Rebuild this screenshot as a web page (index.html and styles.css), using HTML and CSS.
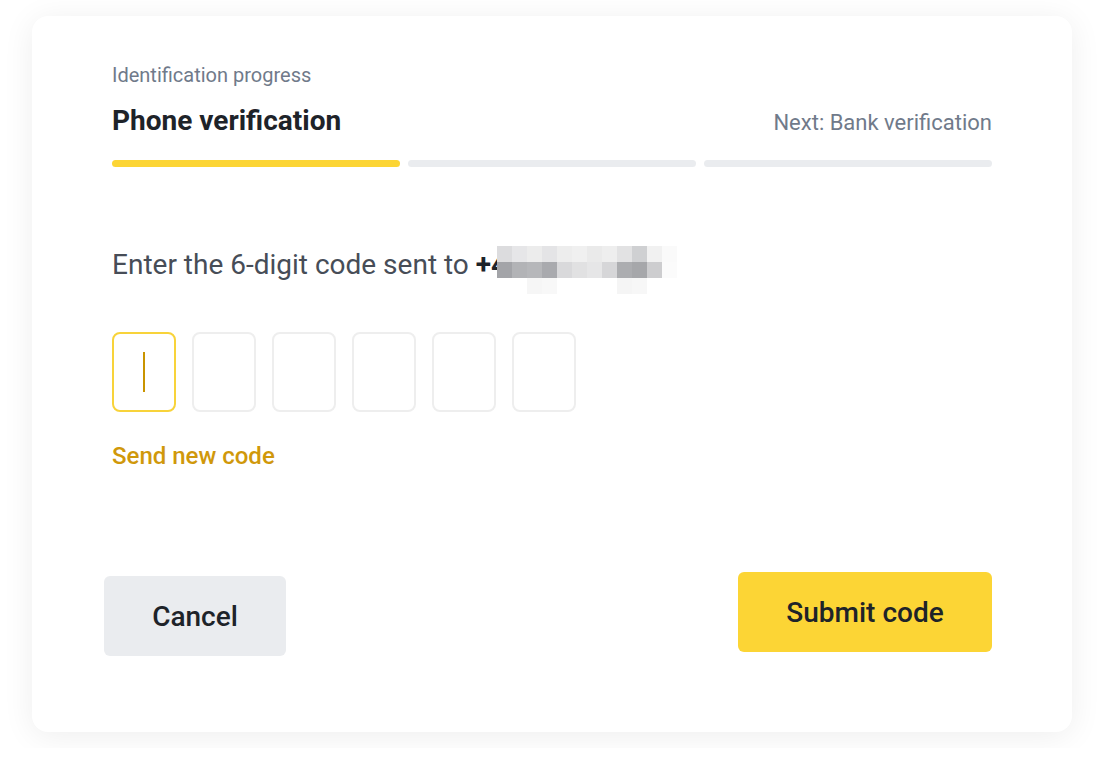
FILE: index.html
```html
<!DOCTYPE html>
<html lang="en">
<head>
    <meta charset="UTF-8">
    <meta name="viewport" content="width=device-width, initial-scale=1.0">
    <title>Phone verification</title>
    <link rel="stylesheet" href="styles.css">
</head>
<body>
    <section class="card">
        <div class="eyebrow">Identification progress</div>
        <div class="head">
            <h1>Phone verification</h1>
            <span class="next">Next: Bank verification</span>
        </div>
        <div class="progress">
            <span class="step done"></span>
            <span class="step"></span>
            <span class="step"></span>
        </div>

        <div class="prompt">
            <span>Enter the 6-digit code sent to <b>+4</b></span>
            <span class="blur">
                <i style="background:#dcdcde"></i><i style="background:#e6e6e8"></i><i style="background:#ececec"></i><i style="background:#e4e4e6"></i><i style="background:#ededed"></i><i style="background:#f0f0f0"></i><i style="background:#eaeaea"></i><i style="background:#eeeeee"></i><i style="background:#e2e2e3"></i><i style="background:#cfd0d2"></i><i style="background:#f1f1f1"></i><i style="background:#fafafa"></i>
                <i style="background:#a3a4a8"></i><i style="background:#b2b3b6"></i><i style="background:#b6b7ba"></i><i style="background:#a9aaae"></i><i style="background:#d9d9db"></i><i style="background:#e1e1e2"></i><i style="background:#e6e6e7"></i><i style="background:#d6d6d8"></i><i style="background:#acadb0"></i><i style="background:#a6a7aa"></i><i style="background:#cdcdcf"></i><i style="background:#fbfbfb"></i>
                <i style="background:#fff"></i><i style="background:#fff"></i><i style="background:#f6f6f6"></i><i style="background:#f8f8f8"></i><i style="background:#fff"></i><i style="background:#fff"></i><i style="background:#fff"></i><i style="background:#fff"></i><i style="background:#f5f5f5"></i><i style="background:#f7f7f7"></i><i style="background:#fff"></i><i style="background:#fff"></i>
            </span>
        </div>

        <div class="digits">
            <div class="digit active"><span class="caret"></span></div>
            <div class="digit"></div>
            <div class="digit"></div>
            <div class="digit"></div>
            <div class="digit"></div>
            <div class="digit"></div>
        </div>
        <a class="resend" href="#">Send new code</a>

        <div class="actions">
            <button class="btn cancel">Cancel</button>
            <button class="btn submit">Submit code</button>
        </div>
    </section>
</body>
</html>
```

FILE: styles.css
```css
body {
    margin: 0;
    background-color: #ffffff;
    font-family: Roboto, "Liberation Sans", sans-serif;
    color: #1e2329;
    padding: 16px 32px;
}
.card {
    width: 1040px;
    height: 716px;
    box-sizing: border-box;
    padding: 47px 80px 0;
    background-color: #ffffff;
    border-radius: 16px;
    box-shadow: 0 4px 32px rgba(0, 0, 0, 0.07);
}
.eyebrow {
    font-size: 20px;
    line-height: 24px;
    color: #707a8a;
}
.head {
    display: flex;
    justify-content: space-between;
    align-items: baseline;
    margin-top: 18px;
}
.head h1 {
    margin: 0;
    font-size: 28px;
    line-height: 32px;
    font-weight: 700;
    color: #1e2329;
}
.next {
    font-size: 22px;
    color: #707a8a;
}
.progress {
    display: flex;
    gap: 8px;
    margin-top: 23px;
}
.step {
    flex: 1;
    height: 7px;
    border-radius: 4px;
    background-color: #eaecef;
}
.step.done {
    background-color: #fcd535;
}
.prompt {
    display: flex;
    align-items: flex-start;
    height: 32px;
    margin-top: 82px;
    font-size: 28px;
    line-height: 32px;
    color: #474d57;
}
.prompt b {
    color: #1e2329;
}
/* pixelated phone number, laid over the end of the digits */
.blur {
    display: grid;
    grid-template-columns: repeat(12, 15px);
    grid-auto-rows: 16px;
    margin: -3px 0 0 -10px;
}
.blur i {
    display: block;
}
.digits {
    display: flex;
    gap: 16px;
    margin-top: 51px;
}
.digit {
    width: 64px;
    height: 80px;
    box-sizing: border-box;
    border: 2px solid #eeeeee;
    border-radius: 8px;
    display: flex;
    align-items: center;
    justify-content: center;
}
.digit.active {
    border-color: #f8d33a;
}
.caret {
    width: 2px;
    height: 40px;
    background-color: #c99400;
}
.resend {
    display: inline-block;
    margin-top: 30px;
    font-size: 24px;
    line-height: 28px;
    font-weight: 500;
    color: #d0980b;
    text-decoration: none;
}
.actions {
    display: flex;
    justify-content: space-between;
    align-items: flex-start;
    margin-top: 102px;
}
.btn {
    height: 80px;
    border: none;
    border-radius: 6px;
    font-family: Roboto, "Liberation Sans", sans-serif;
    font-size: 28px;
    font-weight: 500;
    color: #1e2329;
}
.cancel {
    width: 182px;
    margin: 4px 0 0 -8px;
    background-color: #eaecef;
}
.submit {
    width: 254px;
    background-color: #fcd535;
}
```
